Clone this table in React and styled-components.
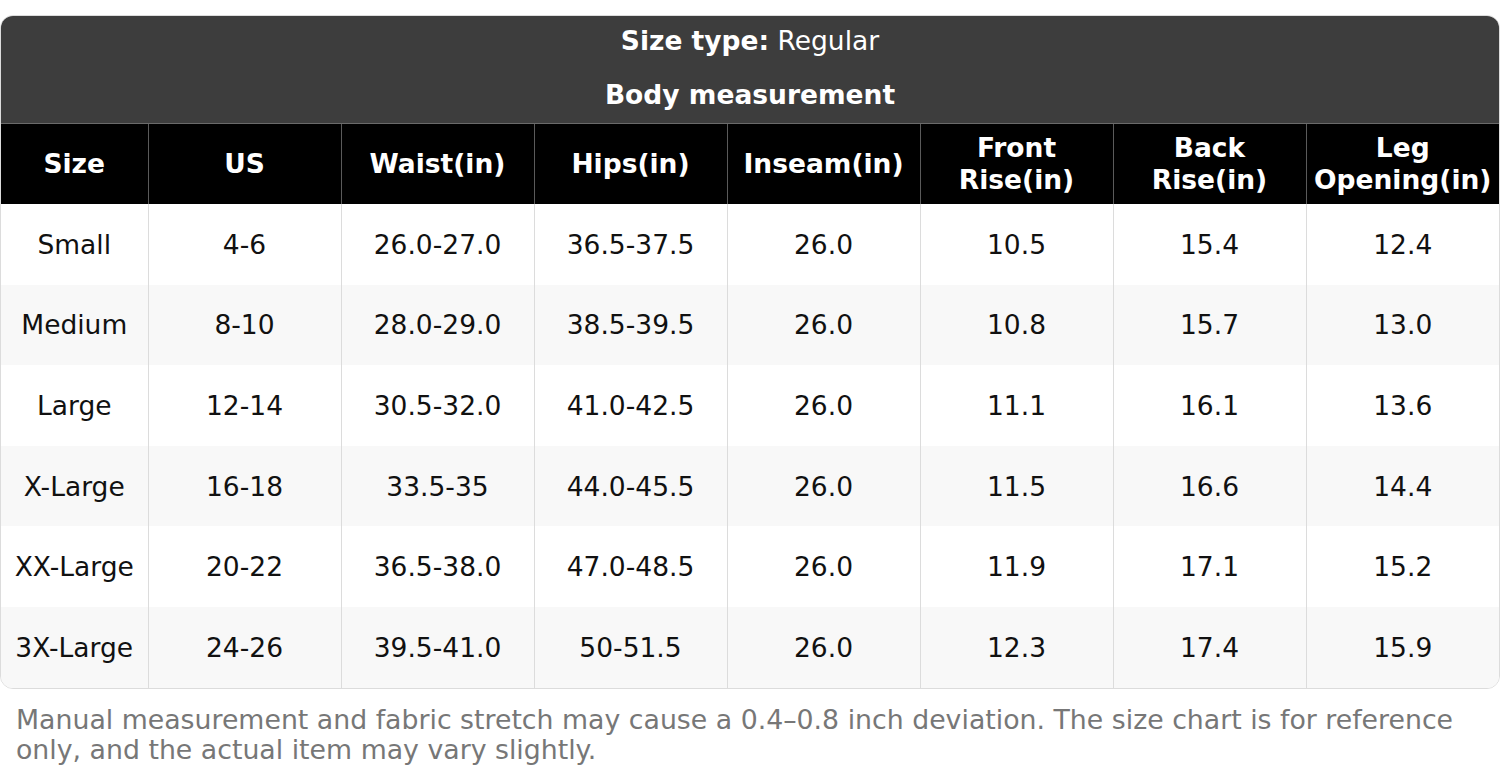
import React from 'react';
import styled, { createGlobalStyle } from 'styled-components';

const GlobalStyle = createGlobalStyle`
  html, body {
    margin: 0;
    padding: 0;
    background: #ffffff;
  }
  body {
    font-family: 'DejaVu Sans', 'Liberation Sans', sans-serif;
  }
`;

const Page = styled.div`
  padding-top: 15px;
  width: 1500px;
`;

const TableFrame = styled.div`
  border: 1px solid #dcdcdc;
  border-radius: 13px;
  overflow: hidden;
`;

const Table = styled.table`
  width: 100%;
  border-collapse: collapse;
  table-layout: fixed;
`;

const TitleCell = styled.th`
  background: #3d3d3d;
  color: #ffffff;
  font-size: 26.5px;
  font-weight: ${({ $light }) => ($light ? 'normal' : 'bold')};
  padding: ${({ $top }) => ($top ? '9px 0 11px' : '11px 0 12px')};
  line-height: 32px;
  text-align: center;
  border-bottom: ${({ $top }) => ($top ? 'none' : '1px solid #6a6a6a')};
`;

const Strong = styled.span`
  font-weight: bold;
`;

const HeadCell = styled.th`
  background: #000000;
  color: #ffffff;
  font-size: 26.5px;
  font-weight: bold;
  line-height: 32px;
  height: 80.5px;
  padding: 0 6px;
  text-align: center;
  box-sizing: border-box;
  border-left: 1px solid #5a5a5a;

  &:first-child {
    border-left: none;
  }
`;

const Row = styled.tr`
  background: ${({ $alt }) => ($alt ? '#f8f8f8' : '#ffffff')};
`;

const Cell = styled.td`
  height: 80.6px;
  padding: 0 4px;
  font-size: 26.5px;
  color: #111111;
  text-align: center;
  white-space: nowrap;
  border-left: 1px solid #dcdcdc;

  &:first-child {
    border-left: none;
  }
`;

const Note = styled.p`
  margin: 16px 0 0;
  padding: 0 16px;
  font-size: 26.75px;
  line-height: 30px;
  color: #777777;
`;

const columns = [
  ['Size'],
  ['US'],
  ['Waist(in)'],
  ['Hips(in)'],
  ['Inseam(in)'],
  ['Front', 'Rise(in)'],
  ['Back', 'Rise(in)'],
  ['Leg', 'Opening(in)'],
];

const rows = [
  ['Small', '4-6', '26.0-27.0', '36.5-37.5', '26.0', '10.5', '15.4', '12.4'],
  ['Medium', '8-10', '28.0-29.0', '38.5-39.5', '26.0', '10.8', '15.7', '13.0'],
  ['Large', '12-14', '30.5-32.0', '41.0-42.5', '26.0', '11.1', '16.1', '13.6'],
  ['X-Large', '16-18', '33.5-35', '44.0-45.5', '26.0', '11.5', '16.6', '14.4'],
  ['XX-Large', '20-22', '36.5-38.0', '47.0-48.5', '26.0', '11.9', '17.1', '15.2'],
  ['3X-Large', '24-26', '39.5-41.0', '50-51.5', '26.0', '12.3', '17.4', '15.9'],
];

function App() {
  return (
    <Page>
      <GlobalStyle />
      <TableFrame>
        <Table>
          <colgroup>
            <col style={{ width: '147px' }} />
            {columns.slice(1).map((c) => (
              <col key={c.join(' ')} />
            ))}
          </colgroup>
          <thead>
            <tr>
              <TitleCell colSpan={8} $top $light>
                <Strong>Size type:</Strong> Regular
              </TitleCell>
            </tr>
            <tr>
              <TitleCell colSpan={8}>Body measurement</TitleCell>
            </tr>
            <tr>
              {columns.map((lines) => (
                <HeadCell key={lines.join(' ')}>
                  {lines.map((l, i) => (
                    <React.Fragment key={l}>
                      {i > 0 && <br />}
                      {l}
                    </React.Fragment>
                  ))}
                </HeadCell>
              ))}
            </tr>
          </thead>
          <tbody>
            {rows.map((r, i) => (
              <Row key={r[0]} $alt={i % 2 === 1}>
                {r.map((v, j) => (
                  <Cell key={j}>{v}</Cell>
                ))}
              </Row>
            ))}
          </tbody>
        </Table>
      </TableFrame>
      <Note>
        Manual measurement and fabric stretch may cause a 0.4–0.8 inch deviation. The size chart is for
        reference only, and the actual item may vary slightly.
      </Note>
    </Page>
  );
}

export default App;
